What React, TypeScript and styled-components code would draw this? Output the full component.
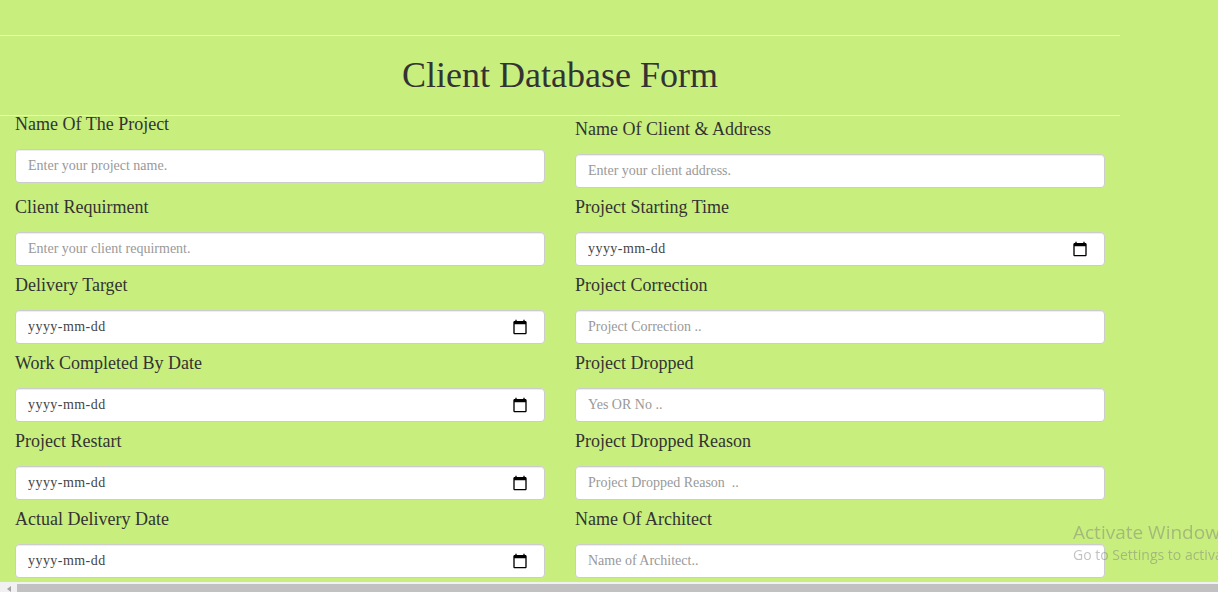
import React from 'react';
import styled, { createGlobalStyle } from 'styled-components';

const GlobalStyle = createGlobalStyle`
  html, body {
    margin: 0;
    padding: 0;
    background: #c8ef7d;
    overflow: hidden;
  }
  body {
    font-family: "Liberation Serif", "Times New Roman", serif;
    color: #333;
  }
  * {
    box-sizing: border-box;
  }
`;

const Page = styled.div`
  width: 1218px;
  height: 592px;
  background: #c8ef7d;
`;

const Container = styled.div`
  width: 1120px;
  padding-top: 35px;
`;

const Header = styled.header`
  height: 81px;
  border-top: 1px solid #e9f6cd;
  border-bottom: 1px solid #e9f6cd;
  display: flex;
  align-items: center;
  justify-content: center;
`;

const Title = styled.h1`
  margin: 0;
  font-size: 36px;
  font-weight: 400;
  color: #333;
  line-height: 1;
  padding-bottom: 2px;
`;

const FormGrid = styled.form`
  display: grid;
  grid-template-columns: 1fr 1fr;
  column-gap: 30px;
  row-gap: 10px;
  align-items: start;
  padding: 0 15px;
  margin-top: -1px;
`;

const Field = styled.div<{ $offset?: number }>`
  display: flex;
  flex-direction: column;
  margin-top: ${(p) => p.$offset ?? 0}px;
`;

const Label = styled.label`
  font-size: 18px;
  line-height: 18px;
  height: 18px;
  margin-bottom: 16px;
  color: #333;
  white-space: nowrap;
`;

const InputWrap = styled.div`
  position: relative;
`;

const Input = styled.input<{ $date?: boolean }>`
  display: block;
  height: 34px;
  width: 100%;
  padding: 6px 12px;
  font-family: "Liberation Serif", "Times New Roman", serif;
  font-size: 14px;
  color: #555;
  background: #fff;
  border: 1px solid #ccc;
  border-radius: 4px;
  box-shadow: inset 0 1px 1px rgba(0, 0, 0, 0.075);
  outline: none;
  letter-spacing: ${(p) => (p.$date ? '0.45px' : '0')};

  &::placeholder {
    color: ${(p) => (p.$date ? '#444' : '#999')};
  }
`;

const CalendarIcon = styled.svg`
  position: absolute;
  right: 17px;
  top: 9px;
  width: 16px;
  height: 16px;
  pointer-events: none;
`;

const Watermark = styled.div`
  position: fixed;
  left: 1073px;
  top: 520px;
  font-family: "Open Sans", "Noto Sans", sans-serif;
  color: rgba(120, 120, 120, 0.45);
  white-space: nowrap;
  pointer-events: none;
`;

const WatermarkTitle = styled.div`
  font-size: 19px;
  line-height: 24px;
`;

const WatermarkSub = styled.div`
  font-size: 14px;
  line-height: 20px;
  margin-top: 1px;
`;

const ScrollBar = styled.div`
  position: fixed;
  left: 0;
  right: 0;
  bottom: 0;
  height: 10px;
  background: #f1f1f1;
  display: flex;
  align-items: stretch;
`;

const ScrollArrow = styled.div`
  width: 17px;
  display: flex;
  align-items: center;
  justify-content: center;
  padding-top: 3px;

  &::before {
    content: '';
    border-top: 3px solid transparent;
    border-bottom: 3px solid transparent;
    border-right: 4px solid #a3a3a3;
  }
`;

const ScrollThumb = styled.div`
  flex: 1;
  margin-top: 2px;
  background: #c1c1c1;
`;

type FieldDef = {
  label: string;
  type: 'text' | 'date';
  placeholder?: string;
  offset?: number;
};

const fields: FieldDef[] = [
  { label: 'Name Of The Project', type: 'text', placeholder: 'Enter your project name.' },
  { label: 'Name Of Client & Address', type: 'text', placeholder: 'Enter your client address.', offset: 5 },
  { label: 'Client Requirment', type: 'text', placeholder: 'Enter your client requirment.' },
  { label: 'Project Starting Time', type: 'date' },
  { label: 'Delivery Target', type: 'date' },
  { label: 'Project Correction', type: 'text', placeholder: 'Project Correction ..' },
  { label: 'Work Completed By Date', type: 'date' },
  { label: 'Project Dropped', type: 'text', placeholder: 'Yes OR No ..' },
  { label: 'Project Restart', type: 'date' },
  { label: 'Project Dropped Reason', type: 'text', placeholder: 'Project Dropped Reason  ..' },
  { label: 'Actual Delivery Date', type: 'date' },
  { label: 'Name Of Architect', type: 'text', placeholder: 'Name of Architect..' },
];

const Calendar = () => (
  <CalendarIcon viewBox="0 0 24 24" aria-hidden="true">
    <path
      fill="#000"
      d="M20 3h-1V1h-2v2H7V1H5v2H4c-1.1 0-2 .9-2 2v16c0 1.1.9 2 2 2h16c1.1 0 2-.9 2-2V5c0-1.1-.9-2-2-2zm0 18H4V8h16v13z"
    />
  </CalendarIcon>
);

export default function App() {
  return (
    <>
      <GlobalStyle />
      <Page>
        <Container>
          <Header>
            <Title>Client Database Form</Title>
          </Header>
          <FormGrid onSubmit={(e) => e.preventDefault()}>
            {fields.map((f, i) => (
              <Field key={f.label} $offset={f.offset}>
                <Label htmlFor={`field-${i}`}>{f.label}</Label>
                <InputWrap>
                  {f.type === 'date' ? (
                    <>
                      <Input id={`field-${i}`} type="text" $date placeholder="yyyy-mm-dd" />
                      <Calendar />
                    </>
                  ) : (
                    <Input id={`field-${i}`} type="text" placeholder={f.placeholder} />
                  )}
                </InputWrap>
              </Field>
            ))}
          </FormGrid>
        </Container>
        <Watermark>
          <WatermarkTitle>Activate Windows</WatermarkTitle>
          <WatermarkSub>Go to Settings to activate Windows.</WatermarkSub>
        </Watermark>
        <ScrollBar>
          <ScrollArrow />
          <ScrollThumb />
        </ScrollBar>
      </Page>
    </>
  );
}
